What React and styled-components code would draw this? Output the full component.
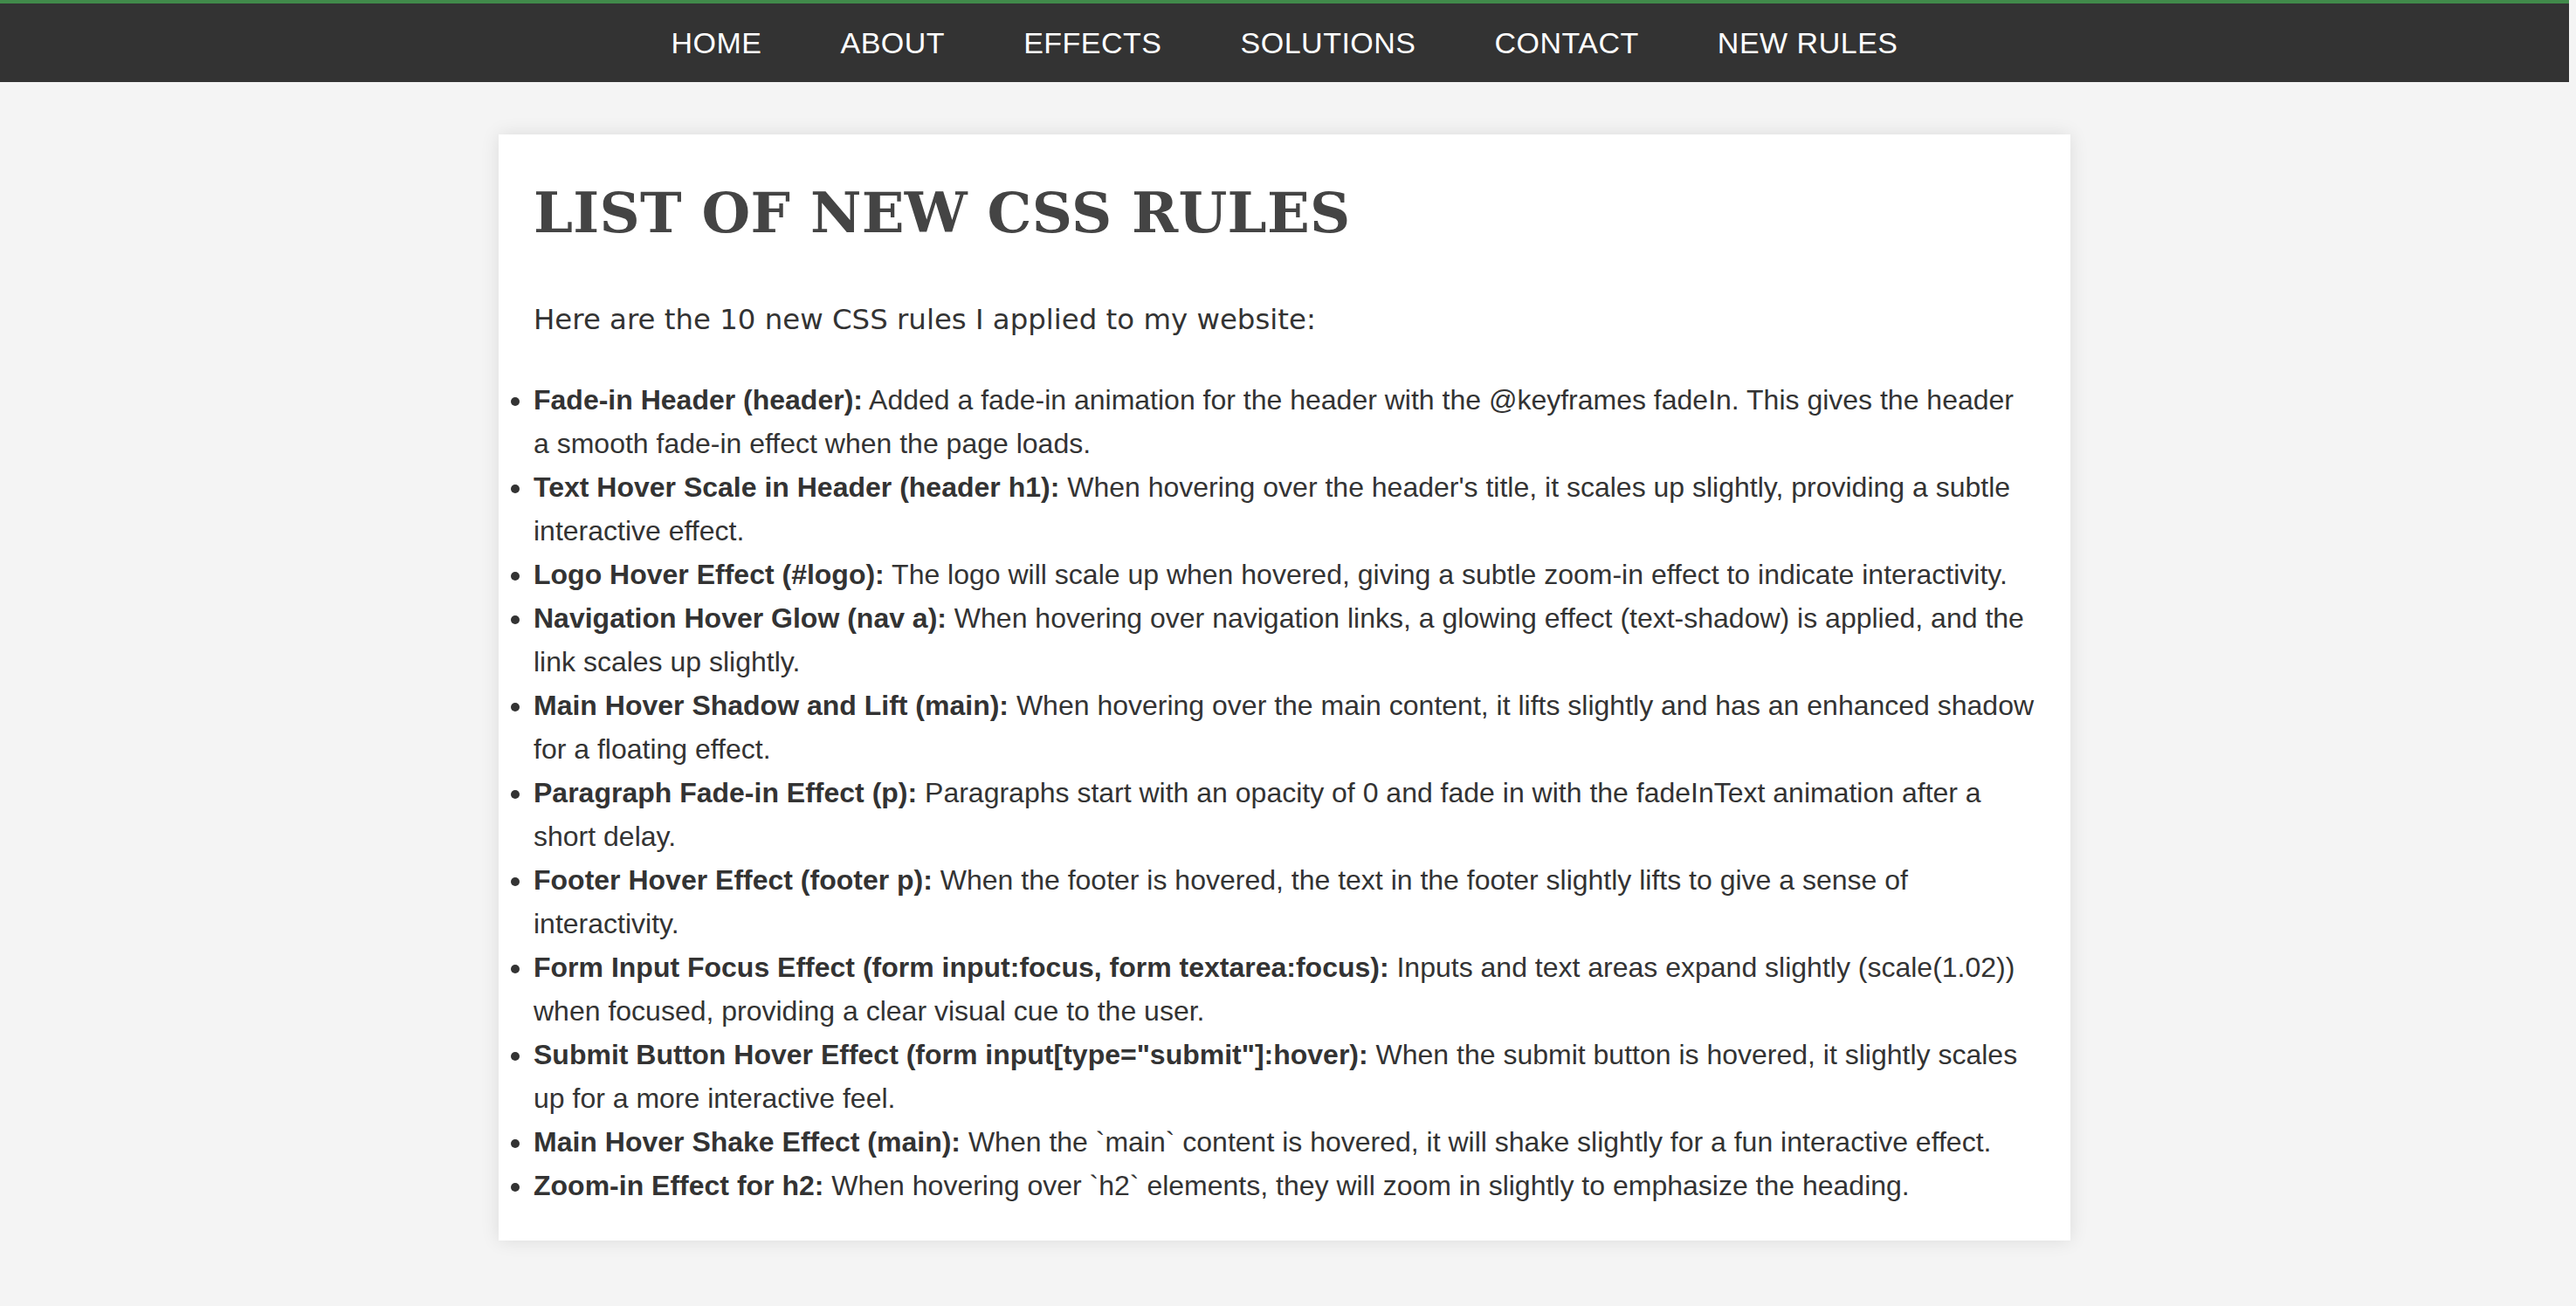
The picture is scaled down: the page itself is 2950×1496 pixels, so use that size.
import React from "react";
import styled, { createGlobalStyle } from "styled-components";

const GlobalStyle = createGlobalStyle`
  html, body {
    margin: 0;
    padding: 0;
    background-color: #f4f4f4;
  }

  body {
    font-family: "Liberation Sans", Arial, sans-serif;
    color: #333;
  }
`;

const Page = styled.div`
  margin-right: 8px;
  padding-bottom: 60px;
`;

const NavBar = styled.nav`
  background-color: #333;
  border-top: 4px solid #418a4b;
  height: 90px;
  display: flex;
  align-items: center;
  justify-content: center;
  gap: 90px;
`;

const NavLink = styled.a`
  color: #fff;
  font-family: "Liberation Sans", Arial, sans-serif;
  font-size: 34px;
  letter-spacing: 0.5px;
  text-decoration: none;
  text-transform: uppercase;
  cursor: pointer;
`;

const Main = styled.main`
  width: 1800px;
  box-sizing: border-box;
  margin: 60px auto 0;
  padding: 52px 40px 38px;
  background-color: #fff;
  box-shadow: 0 0 20px rgba(0, 0, 0, 0.1);
`;

const Title = styled.h1`
  margin: 0;
  font-family: "DejaVu Serif", Georgia, serif;
  font-size: 64px;
  font-weight: bold;
  line-height: 1.2;
  letter-spacing: 0.3px;
  color: #444;
  text-transform: uppercase;
`;

const Intro = styled.p`
  margin: 59px 0 0;
  font-family: "DejaVu Sans", Verdana, sans-serif;
  font-size: 32.4px;
  line-height: 48px;
  color: #333;
`;

const RuleList = styled.ul`
  margin: 43px 0 0;
  padding: 0;
  list-style: disc outside;
`;

const RuleItem = styled.li`
  font-family: "Liberation Sans", Arial, sans-serif;
  font-size: 32px;
  line-height: 50px;
  color: #333;

  strong {
    font-weight: bold;
  }
`;

const links = ["Home", "About", "Effects", "Solutions", "Contact", "New Rules"];

const rules = [
  ["Fade-in Header (header):", "Added a fade-in animation for the header with the @keyframes fadeIn. This gives the header a smooth fade-in effect when the page loads."],
  ["Text Hover Scale in Header (header h1):", "When hovering over the header's title, it scales up slightly, providing a subtle interactive effect."],
  ["Logo Hover Effect (#logo):", "The logo will scale up when hovered, giving a subtle zoom-in effect to indicate interactivity."],
  ["Navigation Hover Glow (nav a):", "When hovering over navigation links, a glowing effect (text-shadow) is applied, and the link scales up slightly."],
  ["Main Hover Shadow and Lift (main):", "When hovering over the main content, it lifts slightly and has an enhanced shadow for a floating effect."],
  ["Paragraph Fade-in Effect (p):", "Paragraphs start with an opacity of 0 and fade in with the fadeInText animation after a short delay."],
  ["Footer Hover Effect (footer p):", "When the footer is hovered, the text in the footer slightly lifts to give a sense of interactivity."],
  ["Form Input Focus Effect (form input:focus, form textarea:focus):", "Inputs and text areas expand slightly (scale(1.02)) when focused, providing a clear visual cue to the user."],
  ["Submit Button Hover Effect (form input[type=\"submit\"]:hover):", "When the submit button is hovered, it slightly scales up for a more interactive feel."],
  ["Main Hover Shake Effect (main):", "When the `main` content is hovered, it will shake slightly for a fun interactive effect."],
  ["Zoom-in Effect for h2:", "When hovering over `h2` elements, they will zoom in slightly to emphasize the heading."],
];

const App = () => {
  return (
    <Page>
      <GlobalStyle />
      <NavBar>
        {links.map((link) => (
          <NavLink key={link}>{link}</NavLink>
        ))}
      </NavBar>
      <Main>
        <Title>List of New CSS Rules</Title>
        <Intro>Here are the 10 new CSS rules I applied to my website:</Intro>
        <RuleList>
          {rules.map(([name, text]) => (
            <RuleItem key={name}>
              <strong>{name}</strong> {text}
            </RuleItem>
          ))}
        </RuleList>
      </Main>
    </Page>
  );
};

export default App;
